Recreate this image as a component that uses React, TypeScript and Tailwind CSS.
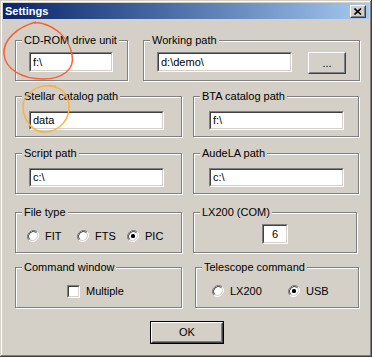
import type { ReactNode } from 'react';

const font = "font-['Liberation_Sans',Arial,sans-serif]";

function GroupBox({
  label,
  className,
  children,
}: {
  label: string;
  className: string;
  children?: ReactNode;
}) {
  return (
    <div
      className={`relative h-[41px] border border-[#808080] shadow-[inset_1px_1px_0_#fff,1px_1px_0_#fff] ${className}`}
    >
      <span className="absolute -top-[7px] left-[6px] bg-[#d4d0c8] px-[2px] text-[11px] leading-[13px] text-black">
        {label}
      </span>
      {children}
    </div>
  );
}

function TextField({ value, className }: { value: string; className: string }) {
  return (
    <div
      className={`border border-t-[#808080] border-l-[#808080] border-b-white border-r-white ${className}`}
    >
      <div className="flex h-full items-center border border-t-[#404040] border-l-[#404040] border-b-[#d4d0c8] border-r-[#d4d0c8] bg-white pl-[2px] text-[11px] text-black">
        {value}
      </div>
    </div>
  );
}

function Button({ label, className, isDefault }: { label: string; className: string; isDefault?: boolean }) {
  const face = (
    <div className="h-full border border-t-white border-l-white border-b-[#404040] border-r-[#404040]">
      <div className="flex h-full items-center justify-center border border-t-[#d4d0c8] border-l-[#d4d0c8] border-b-[#808080] border-r-[#808080] text-[11px] text-black">
        {label}
      </div>
    </div>
  );
  return <div className={`${isDefault ? 'border border-black' : ''} ${className}`}>{face}</div>;
}

function Radio({ checked }: { checked?: boolean }) {
  return (
    <svg width="12" height="12" viewBox="0 0 12 12" className="shrink-0">
      <circle cx="6" cy="6" r="5" fill="#fff" />
      <path d="M10.2 1.8 A6 6 0 0 0 1.8 10.2" fill="none" stroke="#808080" strokeWidth="1" />
      <path d="M9.5 2.5 A5 5 0 0 0 2.5 9.5" fill="none" stroke="#404040" strokeWidth="1" />
      <path d="M1.8 10.2 A6 6 0 0 0 10.2 1.8" fill="none" stroke="#fff" strokeWidth="1" />
      <path d="M2.5 9.5 A5 5 0 0 0 9.5 2.5" fill="none" stroke="#d4d0c8" strokeWidth="1" />
      {checked && <rect x="4" y="4" width="4" height="4" rx="1.5" fill="#000" />}
    </svg>
  );
}

function RadioItem({ label, checked, className }: { label: string; checked?: boolean; className: string }) {
  return (
    <div className={`flex items-center gap-[6px] ${className}`}>
      <Radio checked={checked} />
      <span className="text-[11px] text-black">{label}</span>
    </div>
  );
}

export default function App() {
  return (
    <div
      className={`relative h-[357px] w-[372px] bg-[#d4d0c8] p-[3px] shadow-[inset_-1px_-1px_0_#404040,inset_1px_1px_0_#d4d0c8,inset_-2px_-2px_0_#808080,inset_2px_2px_0_#fff] ${font}`}
    >
      {/* title bar */}
      <div className="flex h-[16px] items-center justify-between bg-gradient-to-r from-[#0a246a] to-[#a6caf0] pl-[2px] pr-[3px]">
        <span className="text-[11px] font-bold text-white">Settings</span>
        <div className="h-[13px] w-[16px] border border-t-white border-l-white border-b-[#404040] border-r-[#404040] bg-[#d4d0c8]">
          <div className="flex h-full items-center justify-center border border-t-[#d4d0c8] border-l-[#d4d0c8] border-b-[#808080] border-r-[#808080]">
            <svg width="8" height="7" viewBox="0 0 8 7">
              <path d="M0.5 0.5 L7 6.5 M7 0.5 L0.5 6.5" stroke="#000" strokeWidth="1.6" />
            </svg>
          </div>
        </div>
      </div>

      <div className="flex flex-col pl-[12px] pt-[21px]">
        {/* row 1 */}
        <div className="flex gap-[15px]">
          <GroupBox label="CD-ROM drive unit" className="w-[113px] pt-[11px] pl-[13px]">
            <TextField value="f:\" className="h-[20px] w-[84px]" />
          </GroupBox>
          <GroupBox label="Working path" className="flex w-[217px] gap-[16px] pt-[11px] pl-[13px]">
            <TextField value="d:\demo\" className="h-[20px] w-[135px]" />
            <Button label="..." className="h-[22px] w-[38px]" />
          </GroupBox>
        </div>

        {/* rows 2-5 */}
        <div className="mt-[15px] grid grid-cols-[167px_166px] gap-x-[11px]">
          <GroupBox label="Stellar catalog path" className="pt-[14px] pl-[13px]">
            <TextField value="data" className="h-[19px] w-[135px]" />
          </GroupBox>
          <GroupBox label="BTA catalog path" className="pt-[14px] pl-[15px]">
            <TextField value="f:\" className="h-[19px] w-[135px]" />
          </GroupBox>

          <GroupBox label="Script path" className="mt-[16px] pt-[14px] pl-[13px]">
            <TextField value="c:\" className="h-[19px] w-[135px]" />
          </GroupBox>
          <GroupBox label="AudeLA path" className="mt-[16px] pt-[14px] pl-[15px]">
            <TextField value="c:\" className="h-[19px] w-[135px]" />
          </GroupBox>

          <GroupBox label="File type" className="mt-[18px] flex items-center pt-[7px] pl-[11px]">
            <RadioItem label="FIT" className="w-[50px]" />
            <RadioItem label="FTS" className="w-[50px]" />
            <RadioItem label="PIC" checked className="w-[50px]" />
          </GroupBox>
          <GroupBox label="LX200 (COM)" className="mt-[18px] mr-[2px] flex justify-center pt-[11px]">
            <TextField value="6" className="h-[20px] w-[26px] [&>div]:justify-center [&>div]:pl-0" />
          </GroupBox>

          <GroupBox label="Command window" className="mt-[14px] flex items-center pt-[7px] pl-[51px]">
            <div className="h-[13px] w-[13px] border border-t-[#808080] border-l-[#808080] border-b-white border-r-white">
              <div className="h-full border border-t-[#404040] border-l-[#404040] border-b-[#d4d0c8] border-r-[#d4d0c8] bg-white" />
            </div>
            <span className="ml-[6px] text-[11px] text-black">Multiple</span>
          </GroupBox>
          <GroupBox label="Telescope command" className="mt-[14px] ml-[2px] flex items-center pt-[7px] pl-[16px]">
            <RadioItem label="LX200" className="w-[76px]" />
            <RadioItem label="USB" checked className="w-[70px]" />
          </GroupBox>
        </div>

        <div className="mt-[13px] flex pl-[135px]">
          <Button label="OK" isDefault className="h-[23px] w-[74px]" />
        </div>
      </div>

      {/* hand-drawn annotations */}
      <svg className="pointer-events-none absolute left-0 top-0" width="372" height="357" viewBox="0 0 372 357">
        <path
          d="M36 22 C17 27 3 40 4 54 C5 69 22 79 43 79 C63 79 75 69 72 55 C70 42 61 31 47 25 C42 23 38 22 34 23"
          fill="none"
          stroke="#f4623a"
          strokeWidth="1.5"
        />
        <path
          d="M56 86 C36 83 22 95 23 108 C24 122 34 133 46 132 C60 131 70 119 69 105 C68 93 61 87 49 86"
          fill="none"
          stroke="#fbb040"
          strokeWidth="1.5"
        />
      </svg>
    </div>
  );
}
